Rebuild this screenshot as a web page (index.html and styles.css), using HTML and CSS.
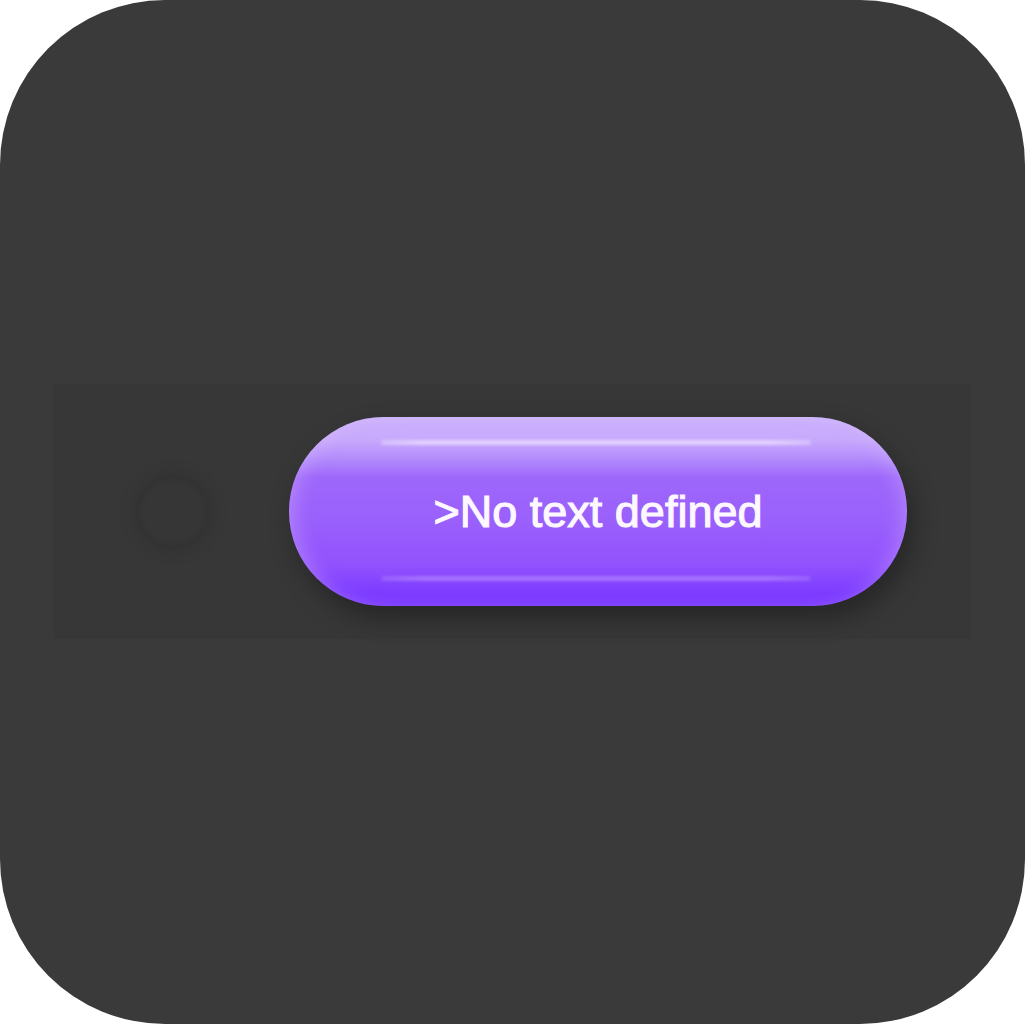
FILE: index.html
```html
<!DOCTYPE html>
<html>
<head>
<meta charset="utf-8">
<link rel="stylesheet" href="styles.css">
</head>
<body>
<div class="frame">
  <div class="panel">
    <div class="dot"></div>
    <div class="pill">
      <span class="shine shine-top"></span>
      <span class="label">&gt;No text defined</span>
      <span class="shine shine-bottom"></span>
    </div>
  </div>
</div>
</body>
</html>
```
FILE: styles.css
```css
html, body {
  margin: 0;
  padding: 0;
  background: #ffffff;
}
.frame {
  width: 1025px;
  height: 1024px;
  background: #3a3a3a;
  border-radius: 165px;
  display: flex;
  align-items: center;
  justify-content: center;
}
.panel {
  width: 917px;
  height: 255px;
  margin-top: -1px;
  background: #373737;
  display: flex;
  align-items: center;
  box-sizing: border-box;
  padding-left: 84px;
}
.dot {
  width: 70px;
  height: 70px;
  border-radius: 50%;
  background: #363636;
  box-shadow: 0 0 0 2px #333333, 0 0 16px 6px rgba(0,0,0,0.08), inset 0 0 6px rgba(0,0,0,0.12);
  flex: none;
}
.pill {
  position: relative;
  margin-left: 81px;
  width: 618px;
  height: 189px;
  border-radius: 95px;
  background: linear-gradient(180deg, #cdb3fc 0%, #c7a9fc 12%, #b48cfc 22%, #9e67fb 32%, #9a60fc 55%, #9252fd 78%, #7e3dff 92%, #7a38ff 100%);
  box-shadow: 6px 12px 26px rgba(0,0,0,0.32), inset 14px 0 20px -10px rgba(230,210,255,0.35), inset -14px 0 20px -10px rgba(230,210,255,0.3);
  display: flex;
  align-items: center;
  justify-content: center;
  flex: none;
}
.label {
  font-family: "Liberation Sans", Arial, sans-serif;
  font-weight: normal;
  font-size: 45px;
  color: #fdf8ff;
  margin-top: 1px;
  -webkit-text-stroke: 1.1px #fdf8ff;
}
.shine {
  position: absolute;
  left: 92px;
  right: 96px;
  height: 5px;
  border-radius: 3px;
  filter: blur(1.5px);
}
.shine-top {
  top: 23px;
  background: linear-gradient(90deg, rgba(230,215,255,0.5), rgba(230,215,255,0.9) 10%, rgba(230,215,255,0.9) 90%, rgba(230,215,255,0.5));
}
.shine-bottom {
  bottom: 25px;
  background: linear-gradient(90deg, rgba(190,150,255,0.3), rgba(190,150,255,0.55) 10%, rgba(190,150,255,0.55) 90%, rgba(190,150,255,0.3));
}
```
